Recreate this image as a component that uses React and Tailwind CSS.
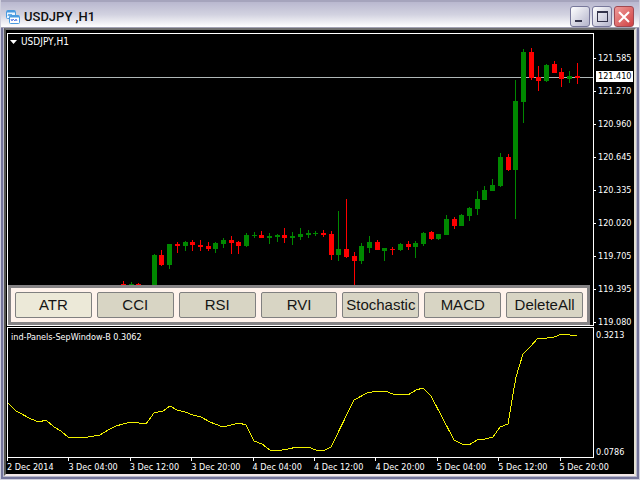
import React, { useState } from 'react';

// slot, wick top, body top, body bottom, wick bottom, rising
const candles = [
    [0, 281, 284, 286, 286, 0], [1, 282, 284, 286, 286, 1], [2, 283, 284, 286, 286, 0],
    [4, 254, 255, 286, 286, 1], [5, 250, 255, 265, 266, 0], [6, 244, 244, 265, 269, 1],
    [7, 242, 244, 246, 253, 0], [8, 241, 242, 246, 251, 1], [9, 240, 242, 245, 251, 0],
    [10, 240, 245, 247, 251, 0], [11, 242, 246, 249, 251, 0], [12, 242, 243, 249, 253, 1],
    [13, 238, 240, 244, 248, 1], [14, 236, 240, 243, 254, 0], [15, 241, 242, 246, 254, 0],
    [16, 233, 235, 246, 247, 1], [17, 232, 235, 236, 238, 1], [18, 231, 235, 238, 238, 0],
    [19, 233, 236, 238, 244, 1], [20, 234, 235, 237, 242, 1], [21, 228, 235, 238, 243, 0],
    [22, 232, 236, 238, 245, 1], [23, 228, 234, 237, 240, 1], [24, 230, 233, 235, 238, 1],
    [25, 231, 233, 234, 236, 1], [26, 230, 233, 235, 237, 0], [27, 231, 234, 255, 260, 0],
    [28, 211, 249, 255, 261, 1], [29, 199, 249, 257, 258, 0], [30, 252, 256, 261, 286, 0],
    [31, 243, 246, 261, 264, 1], [32, 236, 242, 248, 253, 1], [33, 240, 242, 250, 250, 0],
    [34, 248, 248, 251, 261, 1], [35, 247, 249, 250, 255, 0], [36, 243, 244, 250, 251, 1],
    [37, 241, 244, 247, 250, 0], [38, 241, 243, 247, 258, 1], [39, 232, 233, 244, 246, 1],
    [40, 231, 232, 239, 240, 0], [41, 234, 234, 239, 240, 1], [42, 215, 219, 235, 235, 1],
    [43, 217, 219, 226, 229, 0], [44, 214, 215, 226, 226, 1], [45, 207, 208, 216, 221, 1],
    [46, 191, 199, 209, 215, 1], [47, 186, 190, 200, 200, 1], [48, 179, 185, 191, 191, 1],
    [49, 153, 157, 186, 187, 1], [50, 154, 157, 170, 171, 0], [51, 80, 101, 170, 219, 1],
    [52, 49, 52, 102, 123, 1], [53, 48, 52, 78, 80, 0], [54, 66, 77, 81, 91, 0],
    [55, 64, 65, 81, 82, 1], [56, 61, 64, 73, 73, 0], [57, 68, 72, 79, 87, 0],
    [58, 71, 76, 79, 83, 1], [59, 63, 76, 78, 84, 0],
];

const atrLine = '8,403 16,411 31,419 39,422 46,420 54,427 61,431 69,438 73,437 88,437 100,435 108,430 116,426 123,424 131,422 146,424 154,413 163,411 170,406 177,410 185,412 193,415 201,417 210,422 223,427 239,423 246,425 254,441 262,444 270,450 277,451 288,449 297,447 308,447 316,450 323,451 331,447 354,400 367,393 377,391 385,391 393,394 408,395 416,390 423,388 431,396 454,440 462,444 469,445 477,440 485,439 493,437 500,427 508,424 512,400 516,377 523,354 531,346 538,338 547,338 554,337 562,334 570,335 577,336';

const prices = ['121.585', '121.270', '120.960', '120.645', '120.335', '120.020', '119.705', '119.395', '119.080'];

const times = ['2 Dec 2014', '3 Dec 04:00', '3 Dec 12:00', '3 Dec 20:00', '4 Dec 04:00', '4 Dec 12:00', '4 Dec 20:00', '5 Dec 04:00', '5 Dec 12:00', '5 Dec 20:00'];

const indicators = ['ATR', 'CCI', 'RSI', 'RVI', 'Stochastic', 'MACD', 'DeleteAll'];

function TitleBar() {
    const button = 'flex h-[21px] w-5 items-center justify-center rounded-[3px] border';
    return (
        <header className="flex h-7 shrink-0 items-center border-t-2 border-b border-t-[#a5a4bc] border-b-[#a3a3b6] bg-linear-to-b from-[#b9b8cf] via-[#d2d2e0] to-white px-[5px]">
            <svg className="mt-1 h-[14px] w-[14px]" viewBox="0 0 14 14" fill="none" stroke="#4a9be0">
                <rect x="0.5" y="0.5" width="9" height="8" rx="1" fill="#eaf5ff" />
                <path d="M1 1.5h8" strokeWidth="2" />
                <path d="M2 6l1-2 1 2 1-2 1 2" />
                <rect x="3.5" y="5.5" width="10" height="8" rx="1" fill="#ffffff" />
                <path d="M4 6.5h9" strokeWidth="2" />
                <path d="M5 9l1 2 1-2 2 2 1-2 1 2" stroke="#5b7fe8" />
            </svg>
            <h1 className="ml-1 flex-1 pt-1 font-[Roboto,sans-serif] text-[13px] leading-5 font-medium whitespace-pre text-[#111]">USDJPY ,H1</h1>
            <div className="flex gap-[2px] pt-1">
                <button aria-label="Minimize" className={`${button} border-[#77779a] bg-linear-to-br from-white to-[#b4b4cb]`}>
                    <span className="mt-2 mr-1 h-[2px] w-[7px] bg-[#33334a]" />
                </button>
                <button aria-label="Maximize" className={`${button} border-[#77779a] bg-linear-to-br from-white to-[#b4b4cb]`}>
                    <span className="h-[11px] w-[11px] border border-t-2 border-[#33334a]" />
                </button>
                <button aria-label="Close" className={`${button} border-[#a04850] bg-linear-to-br from-[#ee9a9a] to-[#cf3d42]`}>
                    <svg className="h-3 w-3" viewBox="0 0 12 12" stroke="white" strokeWidth="2">
                        <path d="M1 1l10 10M11 1L1 11" />
                    </svg>
                </button>
            </div>
        </header>
    );
}

function PriceChart() {
    return (
        <svg className="min-h-0 w-full flex-1" viewBox="8 34 585 251" preserveAspectRatio="none" shapeRendering="crispEdges">
            <rect x="8" y="77" width="585" height="1" fill="#b0b8b8" />
            {candles.map(([slot, high, top, bottom, low, rising]) => {
                const x = Math.round(123 + slot * 7.69);
                return (
                    <g key={slot} fill={rising ? '#008800' : '#ff0000'}>
                        <rect x={x} y={high} width="1" height={low - high} />
                        <rect x={x - 2} y={top} width="5" height={bottom - top} />
                    </g>
                );
            })}
        </svg>
    );
}

export default function App() {
    const [active, setActive] = useState('ATR');

    return (
        <div className="flex h-screen flex-col overflow-hidden border-x border-b border-[#d0d0de] bg-[#b8b8cc] font-['DejaVu_Sans_Condensed','DejaVu_Sans',sans-serif]">
            <TitleBar />
            <main className="flex min-h-0 flex-1 flex-col border-x-2 border-b-2 border-[#74749a] px-px pb-px">
                <div className="flex min-h-0 flex-1 flex-col border-2 border-t-[#707070] border-r-[#e4e0d4] border-b-[#f4e8e8] border-l-[#55554f] bg-black pt-[3px] pl-px text-[9px] leading-3 text-white">
                    <div className="flex min-h-0 flex-1">
                        <section className="relative flex flex-1 flex-col border border-white">
                            <div className="absolute top-[2px] left-[2px] flex items-center gap-1 text-[10px]">
                                <svg className="h-1 w-[7px]" viewBox="0 0 7 4" fill="white"><path d="M0 0h7L3.500 4z" /></svg>
                                <span>USDJPY,H1</span>
                            </div>
                            <PriceChart />
                            <div className="mr-[3px] grid h-10 shrink-0 grid-cols-7 items-center gap-[5px] border-[3px] border-[#858385] bg-[#fff3ec] px-1">
                                {indicators.map((name) => (
                                    <button
                                        key={name}
                                        onClick={() => setActive(name)}
                                        className={`h-[26px] rounded-[2px] border border-[#808080] font-['Liberation_Sans',sans-serif] text-[15px] text-[#151515] ${active === name ? 'bg-[#ece9d8]' : 'bg-[#d8d5c4]'}`}
                                    >
                                        {name}
                                    </button>
                                ))}
                            </div>
                        </section>
                        <aside className="relative flex w-10 shrink-0 flex-col justify-between pt-[21px] leading-[8px]">
                            {prices.map((price) => (
                                <div key={price} className="flex items-center gap-[2px]">
                                    <span className="h-px w-[2px] bg-white" />
                                    <span>{price}</span>
                                </div>
                            ))}
                            <div className="absolute top-[38px] right-px left-[2px] bg-white pl-[2px] leading-[11px] text-black">121.410</div>
                        </aside>
                    </div>
                    <div className="mt-px flex h-[131px] shrink-0">
                        <section className="relative flex-1 border border-white">
                            <div className="absolute top-[3px] left-[3px]">ind-Panels-SepWindow-B 0.3062</div>
                            <svg className="h-full w-full" viewBox="8 328 585 129" preserveAspectRatio="none" shapeRendering="crispEdges">
                                <polyline points={atrLine} fill="none" stroke="#f2f200" strokeWidth="1" />
                            </svg>
                        </section>
                        <aside className="flex w-10 shrink-0 flex-col justify-between pt-[2px] pl-[2px]">
                            <span>0.3213</span>
                            <span>0.0786</span>
                        </aside>
                    </div>
                    <div className="mr-[13px] grid h-4 shrink-0 grid-cols-10">
                        {times.map((time) => (
                            <div key={time} className="whitespace-nowrap">
                                <div className="h-[3px] w-px bg-white" />
                                {time}
                            </div>
                        ))}
                    </div>
                </div>
            </main>
        </div>
    );
}
